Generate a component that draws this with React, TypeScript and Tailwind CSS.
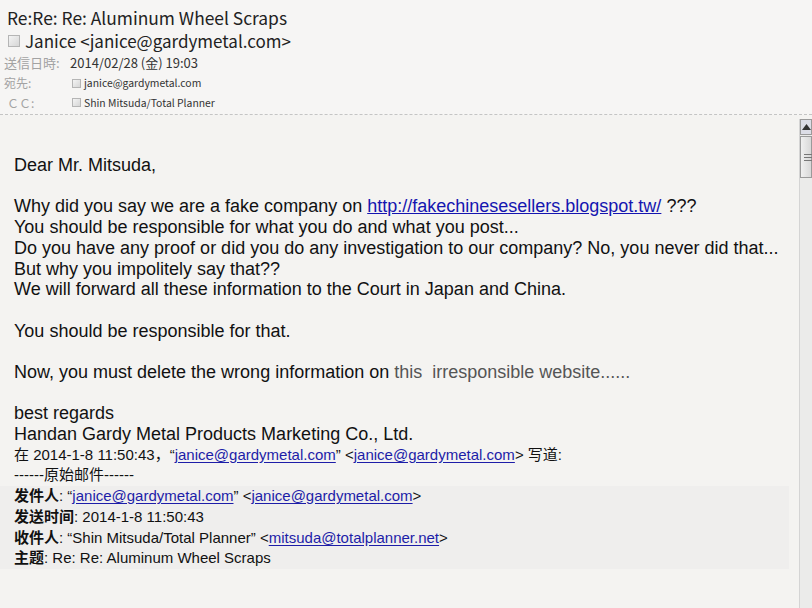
import React from "react";

const jp = { fontFamily: '"Noto Sans CJK JP", "Noto Sans", sans-serif' };
const zh = { fontFamily: '"Liberation Sans", "Noto Sans CJK SC", sans-serif' };

function Box({ className = "" }: { className?: string }) {
  return (
    <span
      className={`inline-block border border-[#b5b5b5] bg-gradient-to-br from-[#f4f4f4] to-[#d6d6d6] ${className}`}
    />
  );
}

function Mail({ children }: { children: React.ReactNode }) {
  return <span className="text-[#1d1da8] underline underline-offset-2">{children}</span>;
}

export default function App() {
  return (
    <div className="w-[812px] h-[608px] overflow-hidden bg-[#f4f3f1] text-[#1a1a1a] flex flex-col">
      {/* Header */}
      <div className="bg-[#f6f5f4] flex flex-col" style={jp}>
        <div className="pt-[6px] pl-[7px] leading-[23px] text-[17.4px] text-[#222]">
          Re:Re: Re: Aluminum Wheel Scraps
        </div>
        <div className="pl-[8px] flex items-center gap-[5px] h-[24px] text-[17px] text-[#222]">
          <Box className="w-[12px] h-[12px]" />
          <span>Janice &lt;janice@gardymetal.com&gt;</span>
        </div>
        <div className="flex items-center h-[20px] text-[13px]">
          <span className="w-[70px] pl-[4px] text-[#a3a3a3]">送信日時:</span>
          <span className="text-[#333]">2014/02/28 (金) 19:03</span>
        </div>
        <div className="flex items-center h-[20px] text-[10.4px]">
          <span className="w-[72px] pl-[4px] text-[12px] text-[#a3a3a3]">宛先:</span>
          <Box className="w-[9px] h-[9px] mr-[3px]" />
          <span className="text-[#333]">janice@gardymetal.com</span>
        </div>
        <div className="flex items-center h-[19px] text-[10.4px]">
          <span className="w-[72px] pl-[7px] text-[12px] text-[#a3a3a3]">ＣＣ:</span>
          <Box className="w-[9px] h-[9px] mr-[3px]" />
          <span className="text-[#333]">Shin Mitsuda/Total Planner</span>
        </div>
        <div className="mt-[2px] border-b border-dashed border-[#c4c4c4]" />
      </div>

      {/* Body + scrollbar */}
      <div className="flex flex-1 min-h-0">
        <div
          className="flex-1 pt-[40px] pl-[14px] text-[18px] leading-[20.7px] text-[#111]"
          style={{ fontFamily: '"Liberation Sans", Arial, sans-serif' }}
        >
          <div>Dear Mr. Mitsuda,</div>
          <div className="h-[20.7px]" />
          <div>
            Why did you say we are a fake company on{" "}
            <span className="text-[#1515b0] underline">http://fakechinesesellers.blogspot.tw/</span> ???
          </div>
          <div>You should be responsible for what you do and what you post...</div>
          <div>Do you have any proof or did you do any investigation to our company? No, you never did that...</div>
          <div>But why you impolitely say that??</div>
          <div>We will forward all these information to the Court in Japan and China.</div>
          <div className="h-[20.7px]" />
          <div>You should be responsible for that.</div>
          <div className="h-[20.7px]" />
          <div>
            Now, you must delete the wrong information on{" "}
            <span className="text-[#555]">this&nbsp; irresponsible website......</span>
          </div>
          <div className="h-[20.7px]" />
          <div>best regards</div>
          <div>Handan Gardy Metal Products Marketing Co., Ltd.</div>

          <div className="text-[15px] leading-[20.7px] text-[#111]" style={zh}>
            <div>
              在 2014-1-8 11:50:43，“<Mail>janice@gardymetal.com</Mail>” &lt;<Mail>janice@gardymetal.com</Mail>&gt; 写道:
            </div>
            <div>------原始邮件------</div>
            <div className="-ml-[14px] pl-[14px] mr-[10px] bg-[#efeeed]">
              <div>
                <b>发件人</b>: “<Mail>janice@gardymetal.com</Mail>” &lt;<Mail>janice@gardymetal.com</Mail>&gt;
              </div>
              <div>
                <b>发送时间</b>: 2014-1-8 11:50:43
              </div>
              <div>
                <b>收件人</b>: “Shin Mitsuda/Total Planner” &lt;<Mail>mitsuda@totalplanner.net</Mail>&gt;
              </div>
              <div>
                <b>主题</b>: Re: Re: Aluminum Wheel Scraps
              </div>
            </div>
          </div>
        </div>

        {/* Scrollbar */}
        <div className="w-[13px] mt-[4px] border-l border-[#d4d4d4] bg-[#ebebea] flex flex-col">
          <div className="h-[16px] border border-[#9a9a9a] bg-[#dcdde6] flex items-center justify-center">
            <svg width="9" height="6" viewBox="0 0 9 6">
              <path d="M0 6 L4.5 0 L9 6 Z" fill="#333" />
            </svg>
          </div>
          <div className="mt-[1px] h-[42px] border border-[#9a9a9a] bg-gradient-to-r from-[#f0f0f0] to-[#d8d8d8] flex flex-col items-start justify-center gap-[2px] pl-[3px]">
            <span className="w-[8px] h-px bg-[#777]" />
            <span className="w-[8px] h-px bg-[#777]" />
            <span className="w-[8px] h-px bg-[#777]" />
          </div>
        </div>
      </div>
    </div>
  );
}
